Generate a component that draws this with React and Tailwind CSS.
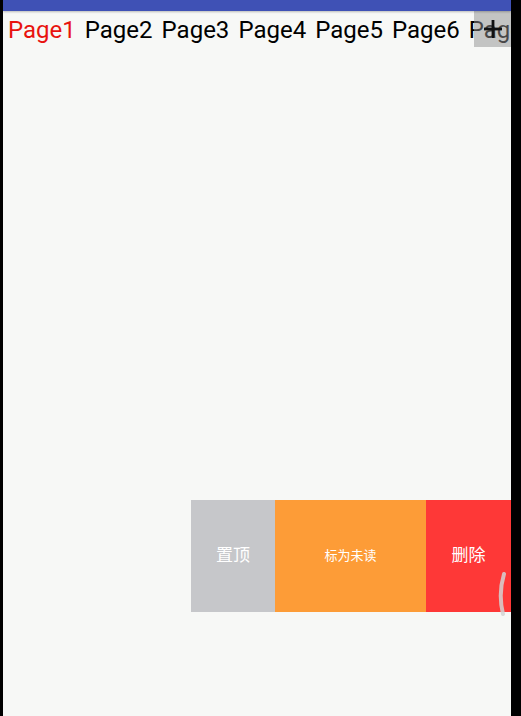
import React from "react";

const tabs = ["Page1", "Page2", "Page3", "Page4", "Page5", "Page6", "Page7"];

export default function App() {
  return (
    <div className="w-[521px] h-[716px] bg-black flex overflow-hidden">
      <div className="w-[3px] shrink-0 bg-black" />
      <div className="w-[508px] shrink-0 bg-[#f7f8f6] flex flex-col relative" style={{ fontFamily: "Roboto, 'Noto Sans CJK SC', sans-serif" }}>
        <div className="h-[11px] bg-[#3f51b5] shadow-[0_1px_2px_rgba(0,0,0,0.25)] z-10" />
        <div className="relative h-[37px] overflow-hidden">
          <div className="flex items-center h-full pl-[5px] whitespace-nowrap">
            {tabs.map((t, i) => (
              <div key={t} className={`w-[76.8px] shrink-0 text-[24px] leading-none text-left ${i === 0 ? "text-[#e8130f]" : "text-black"}`}>
                {t}
              </div>
            ))}
          </div>
          <div className="absolute right-0 top-0 w-[37px] h-[36px] bg-[#909090]/50 flex items-center justify-center">
            <svg width="18" height="18" viewBox="0 0 18 18">
              <rect x="7.6" y="0" width="2.8" height="18" fill="#111" />
              <rect x="0" y="7.6" width="18" height="2.8" fill="#111" />
            </svg>
          </div>
        </div>
        <div className="h-[452px]" />
        <div className="flex h-[112px] pl-[188px] text-white">
          <div className="w-[84px] bg-[#c6c7ca] flex items-center justify-center text-[17px]">置顶</div>
          <div className="w-[151px] bg-[#fd9c37] flex items-center justify-center text-[13px]">标为未读</div>
          <div className="w-[85px] bg-[#fe3837] flex items-center justify-center text-[17px] relative">
            删除
          </div>
        </div>
        <svg className="absolute left-[494px] top-[570px]" width="10" height="48" viewBox="0 0 10 48">
          <path d="M7 4 Q1 24 6 44" stroke="#d4d4d4" strokeOpacity="0.85" strokeWidth="4" strokeLinecap="round" fill="none" />
        </svg>
      </div>
      <div className="flex-1 bg-black" />
    </div>
  );
}
